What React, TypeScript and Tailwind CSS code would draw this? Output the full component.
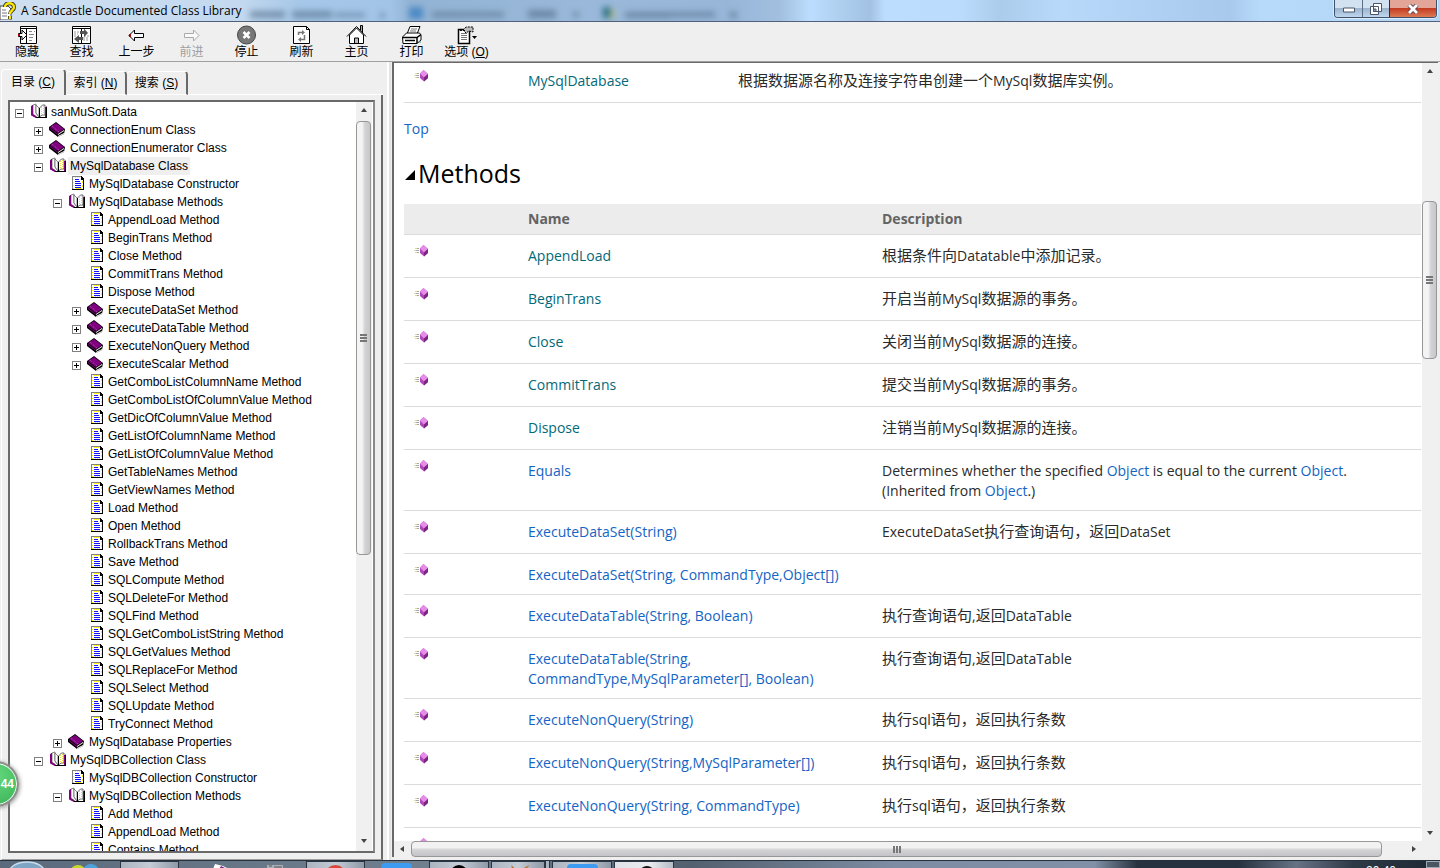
import type { ReactNode } from "react";

type Kind = "open" | "book" | "page";
type TreeNode = [level: number, kind: Kind, label: string];

const method = (name: string): TreeNode => [3, "page", `${name} Method`];

const tree: TreeNode[] = [
  [0, "open", "sanMuSoft.Data"],
  [1, "book", "ConnectionEnum Class"],
  [1, "book", "ConnectionEnumerator Class"],
  [1, "open", "MySqlDatabase Class"],
  [2, "page", "MySqlDatabase Constructor"],
  [2, "open", "MySqlDatabase Methods"],
  ...["AppendLoad", "BeginTrans", "Close", "CommitTrans", "Dispose"].map(method),
  [3, "book", "ExecuteDataSet Method"],
  [3, "book", "ExecuteDataTable Method"],
  [3, "book", "ExecuteNonQuery Method"],
  [3, "book", "ExecuteScalar Method"],
  ...[
    "GetComboListColumnName", "GetComboListOfColumnValue", "GetDicOfColumnValue", "GetListOfColumnName",
    "GetListOfColumnValue", "GetTableNames", "GetViewNames", "Load", "Open", "RollbackTrans", "Save",
    "SQLCompute", "SQLDeleteFor", "SQLFind", "SQLGetComboListString", "SQLGetValues", "SQLReplaceFor",
    "SQLSelect", "SQLUpdate", "TryConnect",
  ].map(method),
  [2, "book", "MySqlDatabase Properties"],
  [1, "open", "MySqlDBCollection Class"],
  [2, "page", "MySqlDBCollection Constructor"],
  [2, "open", "MySqlDBCollection Methods"],
  ...["Add", "AppendLoad", "Contains"].map(method),
];

const indent = ["pl-0", "pl-[19px]", "pl-[38px]", "pl-[57px]"];

const rows: { name: string; desc: ReactNode; own?: boolean }[] = [
  { name: "AppendLoad", desc: "根据条件向Datatable中添加记录。", own: true },
  { name: "BeginTrans", desc: "开启当前MySql数据源的事务。", own: true },
  { name: "Close", desc: "关闭当前MySql数据源的连接。", own: true },
  { name: "CommitTrans", desc: "提交当前MySql数据源的事务。", own: true },
  { name: "Dispose", desc: "注销当前MySql数据源的连接。", own: true },
  {
    name: "Equals",
    desc: (
      <>
        Determines whether the specified <Link>Object</Link> is equal to the current <Link>Object</Link>.<br />
        (Inherited from <Link>Object</Link>.)
      </>
    ),
  },
  { name: "ExecuteDataSet(String)", desc: "ExecuteDataSet执行查询语句，返回DataSet" },
  { name: "ExecuteDataSet(String, CommandType,Object[])", desc: null },
  { name: "ExecuteDataTable(String, Boolean)", desc: "执行查询语句,返回DataTable" },
  { name: "ExecuteDataTable(String, CommandType,MySqlParameter[], Boolean)", desc: "执行查询语句,返回DataTable" },
  { name: "ExecuteNonQuery(String)", desc: "执行sql语句，返回执行条数" },
  { name: "ExecuteNonQuery(String,MySqlParameter[])", desc: "执行sql语句，返回执行条数" },
  { name: "ExecuteNonQuery(String, CommandType)", desc: "执行sql语句，返回执行条数" },
  { name: "ExecuteNonQuery(String, CommandType,MySqlParameter[])", desc: "执行sql语句，返回执行条数" },
];

function Link({ children, own }: { children: ReactNode; own?: boolean }) {
  return <a href="#" className={own ? "text-[#03697a]" : "text-[#1364c4]"}>{children}</a>;
}

// Chinese runs are set one size larger than the latin ones
function Mixed({ text }: { text: string }) {
  return text.split(/([\u4e00-\u9fff。，]+)/).map((run, i) =>
    i % 2 === 0 ? run : <span key={i} lang="zh-CN" className="text-[15px] leading-none">{run}</span>
  );
}

function TreeIcon({ kind }: { kind: Kind }) {
  if (kind === "page")
    return (
      <svg viewBox="0 0 16 16" className="size-4" shapeRendering="crispEdges">
        <path d="M3 2h9l3 3v10H3z" fill="#fff" />
        <path d="M3 1h9v1H4v12H3z" fill="#808080" />
        <path d="M12 1h1v1h1v1h1v12H3v-1h11V5h-2z" fill="#000" />
        <path d="M6 2h1v1H6zm2 0h1v1H8zm2 0h1v1h-1zM4 4h1v1H4zm0 3h1v1H4zm0 3h1v1H4zm0 3h1v1H4zm3 0h1v1H7zm2 0h1v1H9zm2 0h1v1h-1zm2-7h1v2h-1zm0 4h1v2h-1z" fill="#fe0" />
        <path d="M6 4h4v1H6zm0 2h5v1H6zm0 2h6v1H6zm0 2h6v1H6zm0 2h6v1H6z" fill="#11f" />
      </svg>
    );
  if (kind === "book")
    return (
      <svg viewBox="1 0 16 16" className="size-4 overflow-visible">
        <path d="M0 6 7 1l9 7-1 5-6 3-9-7z" fill="#000" />
        <path d="M1 6 7 2l8 6-6 4z" fill="#800080" />
        <path d="m1 8 8 6v-1L1 7z" fill="#800080" />
        <path d="m9 13 6-4v1l-6 4zm0 2 6-3v1l-6 3z" fill="#fff" />
        <path d="m3 5 7 6" stroke="#b050b0" strokeDasharray="1 1" />
      </svg>
    );
  return (
    <svg viewBox="0 0 16 16" className="size-4">
      <path d="M1 2 0 4v8l5 3h11V4l-1-1v11H7l-5-3V2z" fill="#800080" />
      <path d="M2 2 5 1v9l3 4-1 1-5-4z" fill="#fff" stroke="#555" strokeWidth=".7" />
      <path d="m5 2 3 3v9l-3-4z" fill="#fff" stroke="#555" strokeWidth=".7" />
      <path d="m8.500 5 3-3h2.500v10h-3l-2.500 2z" fill="#fff" stroke="#444" strokeWidth=".8" />
      <path d="M10.500 4v8M12.500 3v9" stroke="#f0e030" strokeDasharray="1 1" />
      <path d="M5 14.500h11M8.500 5v9M15.500 4v10" stroke="#000" />
      <path d="M1 3v9l4 2" fill="none" stroke="#800080" strokeWidth="1.500" />
      <path d="M14.500 4v10" stroke="#800080" />
    </svg>
  );
}

function Tree() {
  return (
    <ul className="min-w-0 flex-1 overflow-hidden pt-px text-[12px] leading-[18px] text-black">
      {tree.map(([level, kind, label], i) => (
        <li key={i} className={`flex h-[18px] items-start whitespace-nowrap ${indent[level]}`}>
          <span className="flex w-[21px] shrink-0 pl-[5px] pt-[6px]">
            {kind !== "page" && (
              <button aria-label={kind === "open" ? "Collapse" : "Expand"} className="size-[9px] border border-[#808080] bg-white">
                <svg viewBox="0 0 7 7" className="size-[7px]" shapeRendering="crispEdges">
                  <path d={kind === "open" ? "M1 3h5v1H1z" : "M1 3h5v1H1zM3 1h1v5H3z"} />
                </svg>
              </button>
            )}
          </span>
          <TreeIcon kind={kind} />
          <a href="#" className={`ml-0.5 px-0.5 ${i === 3 ? "bg-[#efefef]" : ""}`}>{label}</a>
        </li>
      ))}
    </ul>
  );
}

function MethodIcon() {
  return (
    <svg viewBox="0 0 16 16" className="size-4">
      <path d="M1 5.500h3M0 7.500h3M1 9.500h3" stroke="#ddd98e" />
      <path d="M3 5.500h2M2 7.500h3M3 9.500h2" stroke="#a3a9b3" />
      <path d="M9.500 2 14 6v4l-4 3.500L6 10V5.500z" fill="#b146b8" />
      <path d="M9.500 2 14 6l-4 3.500-4-4z" fill="#e58ee8" />
      <path d="M10 9.500 14 6v4l-4 3.500z" fill="#7c2683" />
    </svg>
  );
}

function Arrow({ d, label }: { d: string; label: string }) {
  return (
    <button aria-label={label} className="flex size-4 shrink-0 items-center justify-center">
      <svg viewBox="0 0 8 8" className="size-2"><path d={d} fill="#444" /></svg>
    </button>
  );
}

const up = "M1 6l3-4 3 4z";
const down = "M1 2l3 4 3-4z";

const tools: { label: string; icon: ReactNode; off?: boolean; hot?: string }[] = [
  {
    label: "隐藏",
    icon: (
      <>
        <path d="M3.500 1.500h16v17h-16z" fill="#fff" stroke="#000" />
        <path d="M4 3.500h15M9.500 4v14" stroke="#000" />
        <path d="M12 6.500h3M12 9.500h5M12 12.500h4M12 15.500h3M17 6.500h1" stroke="#888" />
        <path d="M1.500 8.500H5V5l5 5-5 5v-3.500H1.500z" fill="#fff" stroke="#000" />
        <path d="M1 9h2v2H1z" fill="#a00" />
      </>
    ),
  },
  {
    label: "查找",
    icon: (
      <>
        <path d="M1.500 1.500h18v17h-18z" fill="#fff" stroke="#000" />
        <path d="M2 3.500h17M10.500 4v14" stroke="#000" />
        <path d="M3 7h5M3 9h4M12 13h5M12 15h6M3 11h3M13 11h5" stroke="#999" strokeDasharray="2 1" />
        <path d="M9 9V6h4V3.500L17 8l-4 4V9zM12 12v3H8v3l-5-4 5-4v2z" fill="#555" />
      </>
    ),
  },
  {
    label: "上一步",
    icon: <><path d="M3 10.500 8.500 5v3.500h9v4h-9V16z" fill="#fff" stroke="#000" /><path d="M3 9h2v3H3z" fill="#a00" /></>,
  },
  { label: "前进", off: true, icon: <path d="M18 10.500 12.500 5v3.500h-9v4h9V16z" fill="#fafafa" stroke="#a9a9a9" /> },
  {
    label: "停止",
    icon: (
      <>
        <circle cx="10.500" cy="10" r="9" fill="#777" stroke="#444" />
        <path d="m7.500 7 6 6m0-6-6 6" stroke="#fff" strokeWidth="2.500" />
      </>
    ),
  },
  {
    label: "刷新",
    icon: (
      <>
        <path d="M2.500 1.500h13l3 3v14h-16z" fill="#fff" stroke="#000" />
        <path d="M15.500 1.500v3h3" fill="none" stroke="#000" />
        <path d="M7.500 10V7.500H12M13.500 10v4.500H9" fill="none" stroke="#777" strokeWidth="1.500" />
        <path d="m11 5 3 2.500-3 2.500zM10 12l-3 2.500 3 2.500z" fill="#777" />
      </>
    ),
  },
  {
    label: "主页",
    icon: (
      <>
        <path d="M3.500 10v8.500h14V10l-7-7z" fill="#fff" stroke="#000" />
        <path d="M14.500 5V.5h2V8" fill="#aaa" stroke="#000" />
        <path d="m1 11.500 9.500-10 9.500 10" fill="none" stroke="#000" />
        <path d="M8.500 18v-5h4v5" fill="#bbb" stroke="#000" />
      </>
    ),
  },
  {
    label: "打印",
    icon: (
      <>
        <path d="m6 9 3-7.500h10L16 9z" fill="#fff" stroke="#000" />
        <path d="M10 4h6M9 6h6" stroke="#777" />
        <path d="m1.500 12 4-4h13l1.500 2v5l-4 3.500h-14z" fill="#fff" stroke="#000" />
        <path d="M2 12.500h14l4-3M16 13v5M4 15.500h10" fill="none" stroke="#000" strokeWidth="1.500" />
        <path d="M18 17h2" stroke="#39a0aa" />
      </>
    ),
  },
  {
    label: "选项",
    hot: "O",
    icon: (
      <>
        <path d="M2.500 4.500h11v14h-11z" fill="#fff" stroke="#000" strokeWidth="1.500" />
        <path d="M5 8.500h6M5 10.500h6M5 12.500h6M5 14.500h6" stroke="#777" />
        <path d="M4 5.500h5M7 5l3-3h7v5l-4-1-3 2z" fill="#bbb" stroke="#000" strokeDasharray="2 1" />
        <path d="M16 11h5l-2.500 3z" fill="#000" />
      </>
    ),
  },
];

function Caption() {
  return (
    <header className="relative flex h-[22px] shrink-0 overflow-hidden border-b border-[#52617a] bg-[linear-gradient(90deg,#cfdff0_0,#c3d9ef_240px,#a6c7e8_300px,#a2c4e7_390px,#93b3d4_410px,#9ab9da_590px,#97b6d8_730px,#a2bfdf_780px,#bcddfd_810px,#a3c2e3_870px,#bcddfd_885px,#bbdcfc_960px,#abcceb_1000px,#b8d9fa_1060px,#a9c9ec_1230px,#b8dafa_1260px,#b4d6f6_100%)]">
      <svg aria-hidden="true" className="absolute left-0 top-0 h-full w-[860px] blur-[3px]">
        <g fill="#4d6784" opacity=".6">
          <path d="M250 11h35v7h-35zM292 11h40v7h-40zM335 13h30v4h-30zM380 13h5v5h-5zM432 12h72v5h-72zM528 10h28v8h-28zM573 12h6v5h-6zM625 12h46v6h-46zM671 12h44v5h-44zM730 12h7v6h-7z" />
        </g>
        <path d="M409 7h14v12h-14z" fill="#397fc0" opacity=".8" />
        <path d="M603 7h7v11h-7z" fill="#266e80" />
        <path d="M610 9h5v10h-5z" fill="#afb78f" />
      </svg>
      <div className="relative flex flex-1 items-center gap-[5px]">
        <svg viewBox="0 0 16 18" className="h-[18px] w-4">
          <path d="M0 4h8l3 3v11H0z" fill="#fff" stroke="#444" />
          <path d="M2 8h4M2 11h5M2 14h5" stroke="#778" />
          <path d="M5 5c0-5 9-5 9 0 0 4-4 3-4 7M10 14v3" fill="none" stroke="#222" strokeWidth="4" />
          <path d="M5 5c0-5 9-5 9 0 0 4-4 3-4 7M10 14v3" fill="none" stroke="#fbe800" strokeWidth="2.500" />
        </svg>
        <h1 className="font-['Open_Sans',sans-serif] text-[12px] leading-5 text-black">A Sandcastle Documented Class Library</h1>
      </div>
      <div className="relative mr-[3px] flex h-[18px] overflow-hidden rounded-b border border-t-0 border-[#3f5269] shadow-[0_0_0_1px_#dcebfa]">
        <button aria-label="Minimize" className="flex w-7 items-center justify-center border-r border-[#5c6f87] bg-[linear-gradient(#d3e2f1_45%,#9db4cf_50%,#bfd6ee)]">
          <svg viewBox="0 0 12 6" className="mt-0.5 h-1.5 w-3"><path d="M.5 1h11v4H.5z" fill="#fff" stroke="#4b566b" /></svg>
        </button>
        <button aria-label="Restore" className="flex w-[26px] items-center justify-center bg-[linear-gradient(#d3e2f1_45%,#9db4cf_50%,#bfd6ee)]">
          <svg viewBox="0 0 12 12" className="size-3">
            <path d="M3.500.5h8v8h-8zM.5 3.500h8v8h-8z" fill="#fff" stroke="#4b566b" />
            <path d="M3.500 6h2.500v2.500H3.500z" fill="#8aa3c2" stroke="#4b566b" />
          </svg>
        </button>
        <button aria-label="Close" className="flex w-[47px] items-center justify-center border-l border-[#5c1a14] bg-[linear-gradient(#e3a598_45%,#c43c22_50%,#dc7a55)]">
          <svg viewBox="0 0 12 10" className="h-2.5 w-3">
            <path d="m2 1 8 8M10 1 2 9" stroke="#5a4450" strokeWidth="4.500" />
            <path d="m2 1 8 8M10 1 2 9" stroke="#fff" strokeWidth="2.800" />
          </svg>
        </button>
      </div>
    </header>
  );
}

const tabs = [["目录", "C"], ["索引", "N"], ["搜索", "S"]];

function Sidebar() {
  return (
    <aside className="flex w-[383px] shrink-0 flex-col pl-px pt-[7px]">
      <div role="tablist" className="flex shrink-0 items-end">
        {tabs.map(([name, key], i) => (
          <button
            key={key}
            role="tab"
            aria-selected={i === 0}
            className={
              i === 0
                ? "h-[26px] w-[65px] rounded-t-sm border-l border-r-2 border-t border-l-white border-r-[#696969] border-t-white pb-0.5 text-[12px]"
                : "h-6 w-[61px] rounded-t-sm border-b border-r-2 border-t border-b-white border-r-[#696969] border-t-white text-[12px]"
            }
          >
            {name} (<u>{key}</u>)
          </button>
        ))}
        <span className="flex-1 self-end border-b border-white" />
      </div>
      <div className="flex min-h-0 flex-1 flex-col border-b border-l border-r-2 border-b-[#a0a0a0] border-l-white border-r-[#696969] pb-1.5 pl-1.5 pr-1.5 pt-[5px]">
        <div className="flex min-h-0 flex-1 border-2 border-[#696969] border-r-[#8a8a8a] bg-white">
          <Tree />
          <div className="mr-px flex w-4 shrink-0 flex-col bg-[#f0f0f0] pb-0.5">
            <Arrow d={up} label="Scroll up" />
            <div className="flex min-h-0 flex-1 flex-col pt-[3px]">
              <div className="flex h-[61%] w-[15px] flex-col items-center justify-center gap-px rounded-sm border border-[#979797] bg-[linear-gradient(90deg,#f4f4f4_40%,#d3d3d6_60%,#c8c8cc)]">
                <i className="h-0.5 w-[7px] bg-[#777]" /><i className="h-0.5 w-[7px] bg-[#777]" /><i className="h-0.5 w-[7px] bg-[#777]" />
              </div>
            </div>
            <Arrow d={down} label="Scroll down" />
          </div>
        </div>
      </div>
    </aside>
  );
}

function Topic() {
  return (
    <article className="min-w-0 flex-1 overflow-hidden pl-2.5 pr-px font-['Open_Sans','Noto_Sans_CJK_SC',sans-serif] text-[14px] leading-5 text-[#2a2a2a]">
      <table className="-mt-1 w-full table-fixed">
        <tbody>
          <tr className="h-[43px] border-b border-[#dbdbdb] align-top">
            <td className="w-[114px] pl-2.5 pt-[9px]"><MethodIcon /></td>
            <td className="w-[210px] px-2.5 pt-3"><Link own>MySqlDatabase</Link></td>
            <td className="px-2.5 pt-3"><Mixed text="根据数据源名称及连接字符串创建一个MySql数据库实例。" /></td>
          </tr>
        </tbody>
      </table>
      <p className="mt-4"><Link>Top</Link></p>
      <h2 className="mb-[15px] mt-[18px] flex items-center text-[25px] font-medium leading-8 text-black">
        <svg viewBox="0 0 10 10" className="ml-px mr-[3px] mt-1 size-2.5"><path d="M10 0v10H0z" /></svg>
        Methods
      </h2>
      <table className="w-full table-fixed text-left">
        <thead>
          <tr className="border-b border-[#dbdbdb] bg-[#ececec] text-[#636363]">
            <th className="w-[114px]" aria-label="Icon" />
            <th className="w-[354px] px-2.5 py-[5px]">Name</th>
            <th className="px-2.5 py-[5px]">Description</th>
          </tr>
        </thead>
        <tbody>
          {rows.map(r => (
            <tr key={r.name} className={`border-b border-[#dbdbdb] align-top ${r.desc ? "h-[43px]" : "h-[41px]"}`}>
              <td className="pl-2.5 pt-2"><MethodIcon /></td>
              <td className="px-2.5 pb-[9px] pt-[11px]"><Link own={r.own}>{r.name}</Link></td>
              <td className="px-2.5 pb-[9px] pt-[11px]">{typeof r.desc === "string" ? <Mixed text={r.desc} /> : r.desc}</td>
            </tr>
          ))}
        </tbody>
      </table>
    </article>
  );
}

function Taskbar() {
  const face = "h-full shrink-0 overflow-hidden border border-b-0 border-[#2b3541] bg-[linear-gradient(90deg,#aab4c0,#c4ccd5,#8e9aa8)]";
  return (
    <footer className="flex h-2 shrink-0 items-start overflow-hidden border-t border-[#27313d] bg-[linear-gradient(90deg,#5b6b7d,#70808f_30%,#52606f_48%,#7d8ca2_62%,#8190a6_76%,#26323f_79%,#26323f_86%,#667386_90%,#2e3946_94%,#1d2833)]">
      <button aria-label="Start" className="w-[60px] shrink-0">
        <svg viewBox="0 0 60 8" className="h-2 w-full"><ellipse cx="27" cy="12" rx="18" ry="11" fill="#7fa5c4" stroke="#c9dce9" strokeWidth="1.500" /></svg>
      </button>
      <button aria-label="Messenger" className="w-[60px] shrink-0">
        <svg viewBox="0 0 60 8" className="h-2 w-full"><circle cx="18" cy="12" r="8" fill="#c7d829" /><circle cx="31" cy="11" r="8" fill="#4ea3dc" /></svg>
      </button>
      <button aria-label="Explorer" className={`w-[59px] ${face}`}>
        <svg viewBox="0 0 58 8" className="h-2 w-full"><path d="M15 8V6h14v2z" fill="#e2a743" /></svg>
      </button>
      <button aria-label="Visual Studio" className="w-[62px] shrink-0">
        <svg viewBox="0 0 62 8" className="h-2 w-full"><path d="m34 8 2-5 8 2 6 3z" fill="#fff" /><path d="m40 8 2-3 6 3z" fill="#7b2a86" /></svg>
      </button>
      <button aria-label="Editor" className="w-[65px] shrink-0">
        <svg viewBox="0 0 65 8" className="h-2 w-full"><path d="M26 4h16v4H26z" fill="#a9afb6" /><path d="M28 5h3M33 6h8" stroke="#555" /></svg>
      </button>
      <button aria-label="Browser" className={`w-[59px] ${face}`}>
        <svg viewBox="0 0 58 8" className="h-2 w-full"><circle cx="29" cy="14" r="11" fill="#d9473c" /></svg>
      </button>
      <button aria-label="Cloud" className="w-[64px] shrink-0">
        <svg viewBox="0 0 64 8" className="h-2 w-full"><rect x="16" y="2" width="31" height="12" rx="4" fill="#3d9bf2" /></svg>
      </button>
      <button aria-label="Chat" className={`w-[60px] ${face}`}>
        <svg viewBox="0 0 58 8" className="h-2 w-full"><circle cx="29" cy="12" r="9" fill="#000" /></svg>
      </button>
      <button aria-label="Database" className={`ml-0.5 w-[54px] ${face}`}>
        <svg viewBox="0 0 54 8" className="h-2 w-full"><path d="m20 3 5 5h-4zM29 8l10-5-4 5z" fill="#b9752c" /></svg>
      </button>
      <span className="h-full w-[5px] shrink-0 border-x border-[#2b3541] bg-[#a8b4c0]" />
      <button aria-label="Mail" className={`ml-0.5 w-[60px] ${face}`}>
        <svg viewBox="0 0 58 8" className="h-2 w-full"><rect x="14" y="2" width="31" height="12" rx="4" fill="#3d9bf2" /></svg>
      </button>
      <button aria-label="Help viewer" className="ml-0.5 h-full w-[60px] shrink-0 overflow-hidden border border-b-0 border-[#2b3541] bg-[linear-gradient(90deg,#dfe3e8,#e9ecef_60%,#b4bcc6)]">
        <svg viewBox="0 0 58 8" className="h-2 w-full"><circle cx="32" cy="12" r="7" fill="#ece332" stroke="#111" strokeWidth="2" /></svg>
      </button>
      <time className="ml-auto mr-[30px] mt-[3px] text-[12px] leading-[14px] text-white">20:40</time>
      <button aria-label="Show desktop" className="h-full w-3.5 shrink-0 border border-[#a0aab5] bg-[#4a5663]" />
    </footer>
  );
}

export default function App() {
  return (
    <div className="relative flex h-screen flex-col overflow-hidden bg-[#efefef] font-['Liberation_Sans','Noto_Sans_CJK_SC',sans-serif] text-black">
      <Caption />
      <nav className="flex h-10 shrink-0 border-b border-[#a0a0a0] pt-[3px]">
        {tools.map((t, i) => (
          <button
            key={t.label}
            disabled={t.off}
            className={`flex h-9 shrink-0 flex-col items-center whitespace-nowrap text-[12px] leading-[14px] ${i === 0 ? "w-[54px]" : "w-[55px]"} ${t.off ? "text-[#a0a0a0]" : "text-black"}`}
          >
            <svg viewBox="0 0 21 20" className="h-5 w-[21px] shrink-0 overflow-visible">{t.icon}</svg>
            <span>{t.label}{t.hot && <> (<u>{t.hot}</u>)</>}</span>
          </button>
        ))}
      </nav>
      <main className="flex min-h-0 flex-1">
        <Sidebar />
        <div className="ml-1 w-1 shrink-0 border-l-2 border-white bg-[#e3e3e3]" />
        <section className="mb-[3px] ml-px mr-0.5 flex min-w-0 flex-1 flex-col border-l-2 border-t border-[#696969] bg-white">
          <div className="flex min-h-0 flex-1">
            <Topic />
            <div className="flex w-4 shrink-0 flex-col bg-[#f0f0f0]">
              <Arrow d={up} label="Scroll up" />
              <div className="flex min-h-0 flex-1 flex-col">
                <div className="h-[122px] shrink-0" />
                <div className="flex h-[158px] w-[15px] flex-col items-center justify-center gap-px rounded-sm border border-[#979797] bg-[linear-gradient(90deg,#f4f4f4_40%,#d3d3d6_60%,#c8c8cc)]">
                  <i className="h-0.5 w-[7px] bg-[#777]" /><i className="h-0.5 w-[7px] bg-[#777]" /><i className="h-0.5 w-[7px] bg-[#777]" />
                </div>
              </div>
              <Arrow d={down} label="Scroll down" />
            </div>
          </div>
          <div className="flex h-4 shrink-0 bg-[#f0f0f0] pr-4">
            <Arrow d="M6 1v6L2 4z" label="Scroll left" />
            <div className="flex min-w-0 flex-1 pl-px pr-6">
              <div className="flex h-4 flex-1 items-center justify-center gap-px rounded-sm border border-[#979797] bg-[linear-gradient(#f2f2f2_40%,#d3d3d6_55%,#c4c4c8)]">
                <i className="h-[7px] w-0.5 bg-[#777]" /><i className="h-[7px] w-0.5 bg-[#777]" /><i className="h-[7px] w-0.5 bg-[#777]" />
              </div>
            </div>
            <Arrow d="M2 1v6l4-3z" label="Scroll right" />
          </div>
        </section>
      </main>
      <Taskbar />
      <div className="absolute -left-[27px] bottom-[61px] flex size-[46px] items-center justify-end rounded-full border-2 border-[#8e8e8e] bg-[radial-gradient(circle_at_50%_30%,#63d77c,#3bb257)] pr-[3px] text-[12px] font-bold text-white shadow-[inset_0_0_0_1px_#fff,1px_1px_4px_#999]">
        44
      </div>
    </div>
  );
}
